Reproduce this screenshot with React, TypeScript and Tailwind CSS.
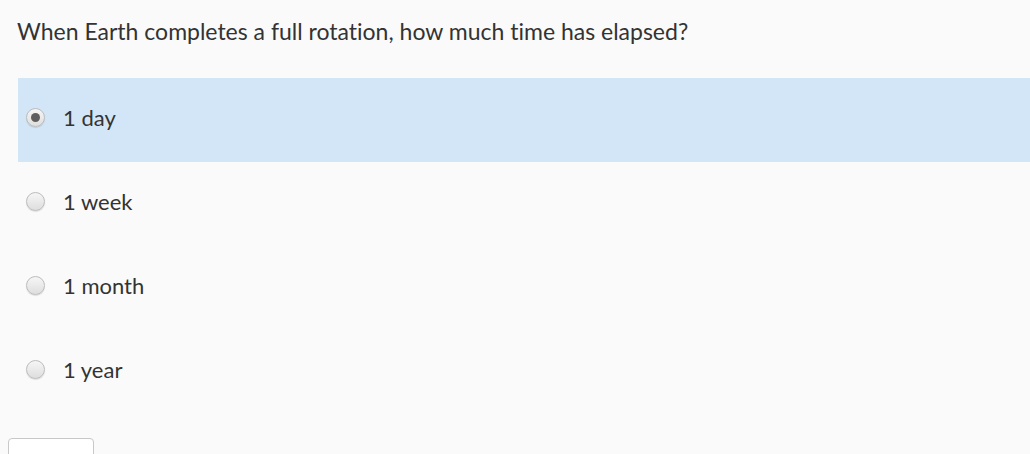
export default function App() {
  const opcoes = ["1 day", "1 week", "1 month", "1 year"];
  const selecionada = 0;

  return (
    <div
      className="h-[454px] w-[1030px] overflow-hidden bg-[#fafafa] text-[#333333]"
      style={{ fontFamily: "Lato, 'Open Sans', sans-serif", fontVariantLigatures: "none" }}
    >
      <p className="pl-[17px] pt-[17px] text-[23px] leading-[28px]">
        When Earth completes a full rotation, how much time has elapsed?
      </p>

      <div className="ml-[18px] mt-[33px]">
        {opcoes.map((op, i) => (
          <label
            key={op}
            className={`flex h-[84px] items-center pb-[5px] ${i === selecionada ? "bg-[#d3e6f7]" : ""}`}
          >
            <span className="ml-[8px] flex h-[19px] w-[19px] items-center justify-center rounded-full border border-[#bcbcbc] bg-gradient-to-b from-[#f6f6f6] to-[#dedede] shadow-[0_1px_1px_rgba(0,0,0,0.12)]">
              {i === selecionada && <span className="h-[9px] w-[9px] rounded-full bg-[#5e5e5e]" />}
            </span>
            <span className="ml-[18px] text-[22px]">{op}</span>
          </label>
        ))}
      </div>

      <button className="ml-[8px] mt-[24px] h-[40px] w-[86px] rounded-[4px] border border-[#c8c8c8] bg-white" />
    </div>
  );
}
